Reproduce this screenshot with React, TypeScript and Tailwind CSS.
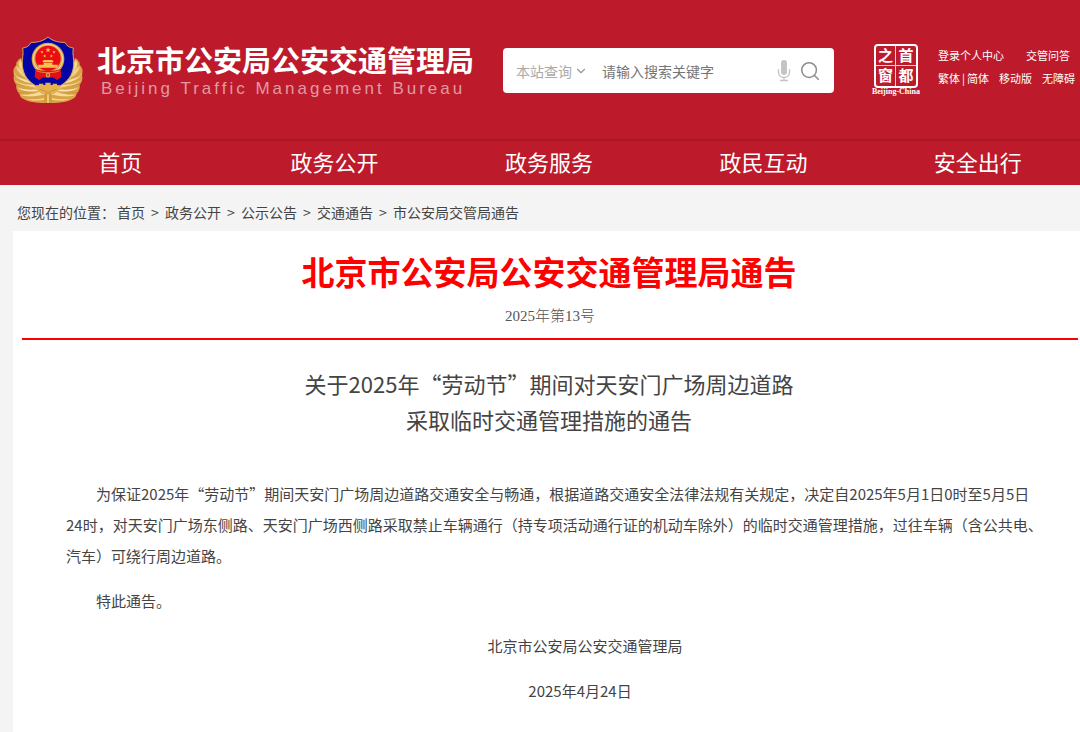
import { ChevronDown, Search } from "lucide-react";

const navItems = ["首页", "政务公开", "政务服务", "政民互动", "安全出行"];

const crumbs = ["首页", "政务公开", "公示公告", "交通通告", "市公安局交管局通告"];

const star = "M0 -5 L1.3 -1.6 L5 -1.5 L2 0.8 L3 4.3 L0 2.2 L-3 4.3 L-2 0.8 L-5 -1.5 L-1.3 -1.6 Z";

function Wheat() {
  return (
    <g>
      <path
        d="M38 74 C28 80 22 88 24 96 C14 104 14 116 17 124 C14 134 16 146 24 154 C22 166 28 176 34 182 C32 192 50 202 72 206 C90 209 106 210 119 208 V140 H60 Z"
        fill="#d9a448"
      />
      <path d="M36 80 C28 90 28 102 46 116 L46 98 Z" fill="#f3d890" />
      <path d="M24 98 C24 112 34 124 58 136 L50 118 Z" fill="#f0d083" />
      <path d="M16 118 C22 134 40 144 70 150 L60 136 C42 136 26 130 16 118 Z" fill="#f8e3a4" />
      <path d="M20 140 C30 156 54 160 86 166 L76 154 C54 154 34 152 20 140 Z" fill="#f3d68a" />
      <path d="M26 162 C40 174 62 176 98 178 L90 168 C64 170 42 170 26 162 Z" fill="#fae6ac" />
      <path d="M36 184 C54 192 80 190 114 182 L96 176 C74 182 54 186 36 184 Z" fill="#f7dd98" />
      <path d="M52 196 C74 204 96 202 119 198 V192 C96 198 72 200 52 196 Z" fill="#f5d990" />
      <path d="M19 126 L62 142 M22 152 L80 164 M32 178 L96 174" stroke="#b9822f" strokeWidth="1.5" fill="none" />
    </g>
  );
}

function PoliceEmblem() {
  return (
    <svg viewBox="14 8 210 204" className="h-[68px] w-[70px] shrink-0" role="img" aria-label="警徽">
      <Wheat />
      <g transform="translate(238 0) scale(-1 1)">
        <Wheat />
      </g>
      <path
        d="M119 11 C104 24 84 28 68 27 C64 38 54 43 43 44 C47 62 40 78 42 96 C45 128 62 146 82 157 H156 C176 146 193 128 196 96 C198 78 191 62 195 44 C184 43 174 38 170 27 C154 28 134 24 119 11 Z"
        fill="#0505a5"
        stroke="#d6a657"
        strokeWidth="3"
      />
      <circle cx="119" cy="77" r="49" fill="#d9a650" />
      <circle cx="119" cy="77" r="44" fill="none" stroke="#f6df9d" strokeWidth="3" />
      <circle cx="119" cy="75" r="38" fill="#ed0c12" />
      <g fill="#f2c552">
        <path d={star} transform="translate(119 50) scale(1.6)" />
        <path d={star} transform="translate(101 56)" />
        <path d={star} transform="translate(137 56)" />
        <path d={star} transform="translate(109 68)" />
        <path d={star} transform="translate(129 68)" />
        <path d="M106 80 L132 80 L136 87 L102 87 Z" />
        <path d="M106 88 H132 V94 H148 V103 H90 V94 H106 Z" />
      </g>
      <path d="M81 107 C96 115 142 115 157 107 L159 131 L146 140 L134 132 C126 135 112 135 104 132 L92 140 L79 131 Z" fill="#e00f18" />
      <path d="M84 112 C100 120 138 120 154 112" stroke="#f0bd51" strokeWidth="2" fill="none" />
      <circle cx="119" cy="125" r="7" fill="#d3a042" />
      <circle cx="119" cy="125" r="3" fill="#e0221b" />
      <path d="M82 168 V157 H92 V151 H105 V156 H111 V148 H127 V156 H133 V151 H146 V157 H156 V168 L137 182 H101 Z" fill="#e5b24e" />
      <path d="M94 168 L119 177 L144 168" stroke="#b9822f" strokeWidth="2" fill="none" />
      <path d="M110 180 H128 L132 208 H106 Z" fill="#d39a3a" />
      <path d="M119 183 V208" stroke="#f8e2a2" strokeWidth="4" />
    </svg>
  );
}

function CapitalSeal() {
  return (
    <a href="#capital" className="flex w-[52px] shrink-0 flex-col items-center text-white">
      <span className="grid h-11 w-11 grid-cols-2 grid-rows-2 rounded-sm border-2 border-white text-center text-[15px] leading-[18px] font-bold">
        <span className="border-r border-b border-white/80">之</span>
        <span className="border-b border-white/80">首</span>
        <span className="border-r border-white/80">窗</span>
        <span>都</span>
      </span>
      <span className="font-['Liberation_Serif',serif] text-[8px] leading-2 font-bold">Beijing-China</span>
    </a>
  );
}

function SearchBox() {
  return (
    <form
      className="mt-0.5 ml-[29px] flex h-[45px] min-w-0 flex-1 items-center rounded bg-white pr-[13px] pl-[13px]"
      onSubmit={(e) => e.preventDefault()}
    >
      <select aria-label="查询范围" className="w-[58px] appearance-none bg-transparent text-sm text-[#aaaaaa] outline-none">
        <option>本站查询</option>
      </select>
      <ChevronDown size={14} className="pointer-events-none shrink-0 text-[#999999]" />
      <input
        type="text"
        aria-label="搜索关键字"
        placeholder="请输入搜索关键字"
        className="ml-3.5 min-w-0 flex-1 bg-transparent text-sm outline-none placeholder:text-[#757575]"
      />
      <button type="button" aria-label="语音输入" className="shrink-0">
        <svg viewBox="0 0 14 24" className="h-6 w-3.5">
          <rect x="4" y="1" width="6" height="15" rx="3" fill="#c4c4c4" />
          <path d="M1.5 10 V13 C1.5 20.3 12.5 20.3 12.5 13 V10 M7 18.5 V21.5 M3 21.5 H11" fill="none" stroke="#c4c4c4" strokeWidth="1.3" />
        </svg>
      </button>
      <button type="submit" aria-label="搜索" className="ml-2 shrink-0 text-[#8e8e8e]">
        <Search size={22} strokeWidth={1.7} />
      </button>
    </form>
  );
}

function Header() {
  return (
    <header className="bg-[#bd1b2c] text-white">
      <div className="flex h-[139px] items-center pr-[5px] pl-[13px]">
        <PoliceEmblem />
        <div className="ml-3.5 shrink-0 pt-0.5 whitespace-nowrap">
          <p className="text-[29px] leading-9 font-bold">北京市公安局公安交通管理局</p>
          <p className="pl-1 font-['Liberation_Sans',sans-serif] text-[17px] leading-6 tracking-[3px] text-[#e09aa2]">
            Beijing Traffic Management Bureau
          </p>
        </div>
        <SearchBox />
        <div className="ml-9 flex shrink-0 items-center gap-4">
          <CapitalSeal />
          <div className="w-[137px] pb-[5px] text-[11px] leading-[23px] whitespace-nowrap">
            <div className="flex justify-between pr-[5px]">
              <a href="#login">登录个人中心</a>
              <a href="#faq">交管问答</a>
            </div>
            <div className="flex justify-between">
              <span className="flex gap-0.5">
                <a href="#hant">繁体</a>
                <span>|</span>
                <a href="#hans">简体</a>
              </span>
              <a href="#mobile">移动版</a>
              <a href="#accessible">无障碍</a>
            </div>
          </div>
        </div>
      </div>
      <nav className="border-t-2 border-[#a61828]">
        <ul className="-mr-[5px] ml-[13px] grid h-11 grid-cols-5 items-center pb-1 text-center text-[22px]">
          {navItems.map((item) => (
            <li key={item}>
              <a href="#nav">{item}</a>
            </li>
          ))}
        </ul>
      </nav>
    </header>
  );
}

function Breadcrumb() {
  return (
    <nav aria-label="您现在的位置" className="flex h-[46px] items-center pt-2 pl-[17px] text-sm whitespace-nowrap text-[#444444]">
      <span className="w-[100px]">您现在的位置：</span>
      {crumbs.map((crumb, i) => (
        <span key={crumb} className="flex">
          {i > 0 && <span className="w-5 text-center">&gt;</span>}
          <a href="#crumb">{crumb}</a>
        </span>
      ))}
    </nav>
  );
}

export default function App() {
  return (
    <div
      lang="zh-CN"
      className="flex min-h-screen flex-col overflow-hidden bg-[#f4f4f4] font-['Noto_Sans_CJK_SC',sans-serif]"
    >
      <Header />
      <Breadcrumb />
      <main className="-mr-[5px] ml-[13px] flex-1 bg-white pt-3.5 text-[#444444]">
        <h1 className="text-center text-[33px] leading-[52px] font-bold text-[#ff0000]">北京市公安局公安交通管理局通告</h1>
        <p className="mr-[7px] ml-[9px] border-b-2 border-[#ff0000] pt-1.5 pb-[9px] text-center font-['Liberation_Serif','Noto_Sans_CJK_SC',serif] text-[15px] leading-[26px] font-light text-[#555555]">
          2025年第13号
        </p>
        <h2 className="mt-[25px] text-center text-[22px] leading-9">
          关于2025年“劳动节”期间对天安门广场周边道路
          <br />
          采取临时交通管理措施的通告
        </h2>
        <div className="mt-[41px] flex flex-col gap-3.5 pr-[35px] pl-[53px] text-[15px] leading-[31px]">
          <p className="indent-[30px]">
            为保证2025年“劳动节”期间天安门广场周边道路交通安全与畅通，根据道路交通安全法律法规有关规定，决定自2025年5月1日0时至5月5日
            <br />
            24时，对天安门广场东侧路、天安门广场西侧路采取禁止车辆通行（持专项活动通行证的机动车除外）的临时交通管理措施，过往车辆（含公共电、汽车）可绕行周边道路。
          </p>
          <p className="indent-[30px]">特此通告。</p>
          <p className="pl-[54px] text-center">北京市公安局公安交通管理局</p>
          <p className="pl-[44px] text-center">2025年4月24日</p>
        </div>
      </main>
    </div>
  );
}
